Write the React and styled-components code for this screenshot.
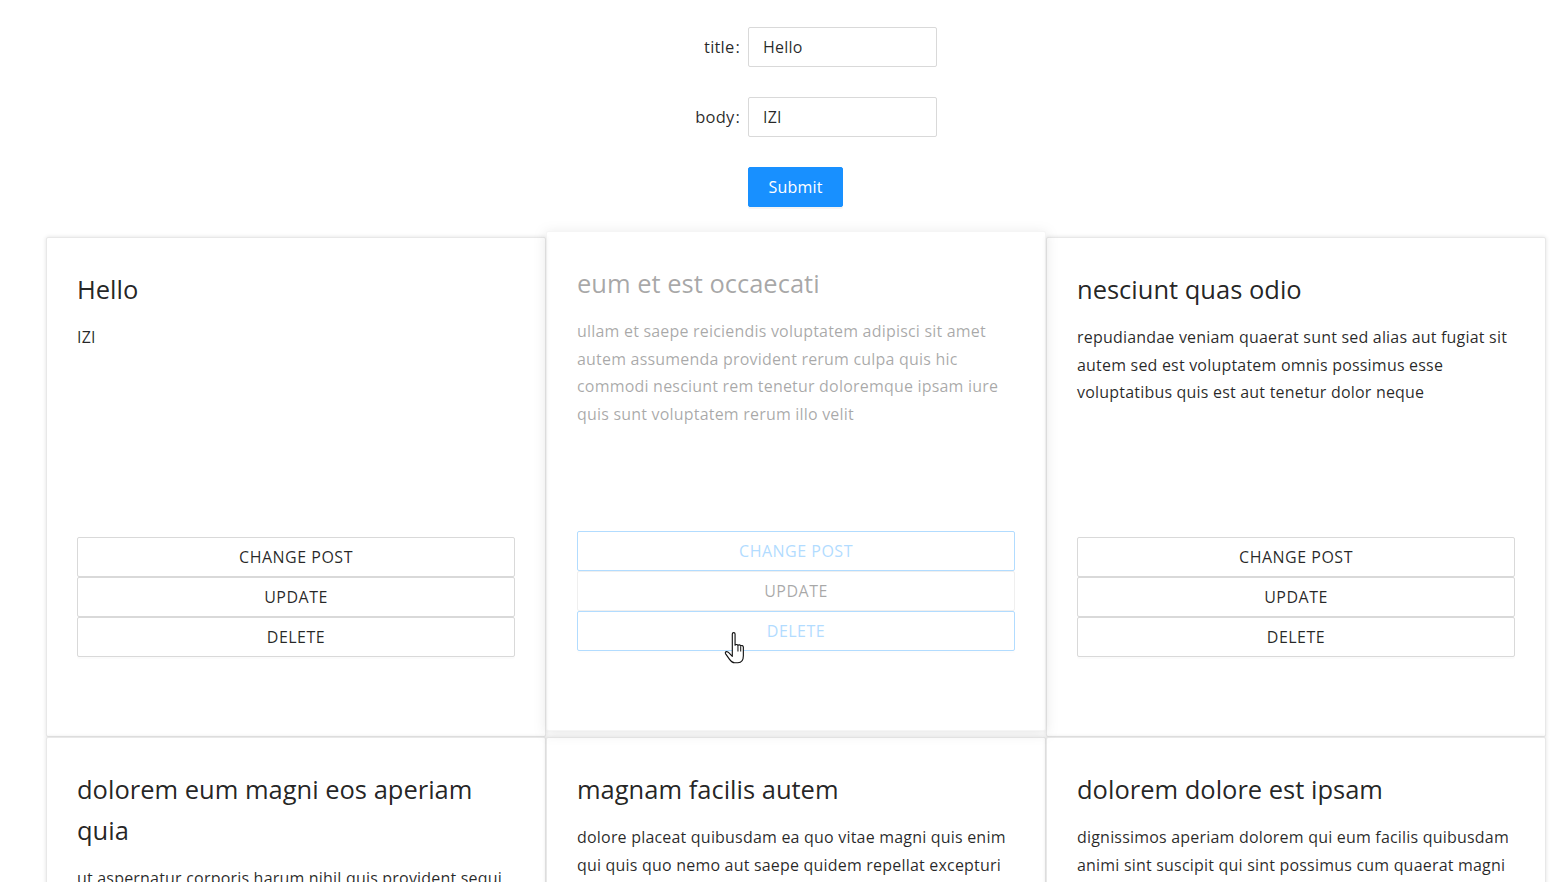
import React from "react";
import styled, { createGlobalStyle } from "styled-components";

const GlobalStyle = createGlobalStyle`
  html, body {
    margin: 0;
    padding: 0;
    background: #fff;
  }
  body {
    font-family: "Open Sans", "Noto Sans", "Liberation Sans", Arial, sans-serif;
    font-size: 16px;
    line-height: 1.7;
    letter-spacing: 0.2px;
    color: rgba(0, 0, 0, 0.85);
    overflow: hidden;
  }
  * { box-sizing: border-box; }
`;

const Page = styled.div`
  position: relative;
  padding-top: 27px;
`;

const Form = styled.form`
  display: flex;
  flex-direction: column;
  gap: 30px;
`;

const FormItem = styled.div`
  display: grid;
  grid-template-columns: 748px 189px;
  align-items: center;
  height: 40px;
`;

const Label = styled.label`
  justify-self: end;
  font-size: 16.5px;
  color: rgba(0, 0, 0, 0.85);
  &::after {
    content: ":";
    margin: 0 8px 0 1px;
  }
`;

const Input = styled.input`
  width: 189px;
  height: 40px;
  padding: 0 14px;
  border: 1px solid #d9d9d9;
  border-radius: 2px;
  font-family: inherit;
  font-size: 16px;
  letter-spacing: 0.2px;
  color: rgba(0, 0, 0, 0.85);
  outline: none;
`;

const SubmitButton = styled.button`
  grid-column: 2;
  justify-self: start;
  width: 95px;
  height: 40px;
  border: 1px solid #1890ff;
  border-radius: 2px;
  background: #1890ff;
  color: #fff;
  font-family: inherit;
  font-size: 16px;
  letter-spacing: 0.2px;
  box-shadow: 0 2px 0 rgba(0, 0, 0, 0.045);
`;

const Grid = styled.div`
  margin: 30px 0 0 46px;
  display: grid;
  grid-template-columns: repeat(3, 500px);
`;

const Card = styled.div`
  position: relative;
  height: 500px;
  padding: 31px 30px 30px;
  display: flex;
  flex-direction: column;
  background: #fff;
  border: 1px solid #e8e8e8;
  border-radius: 2px;
  box-shadow: 0 0 4px rgba(0, 0, 0, 0.12);
  ${(p) =>
    p.$hovered &&
    `
    z-index: 2;
    opacity: 0.4;
    transform: translateY(-6px);
    box-shadow: 0 2px 12px rgba(0, 0, 0, 0.25);
  `}
`;

const Title = styled.h3`
  margin: 0 0 14px;
  font-size: 25.5px;
  font-weight: 500;
  line-height: 41px;
  letter-spacing: 0;
  color: rgba(0, 0, 0, 0.87);
`;

const Body = styled.p`
  margin: 0;
  font-size: 16px;
  line-height: 27.5px;
  color: rgba(0, 0, 0, 0.85);
`;

const Actions = styled.div`
  margin-top: auto;
  margin-bottom: 49px;
  display: flex;
  flex-direction: column;
`;

const ActionButton = styled.button`
  height: 40px;
  width: 100%;
  border: 1px solid ${(p) => (p.$active ? "#40a9ff" : "#d9d9d9")};
  border-radius: 2px;
  background: #fff;
  color: ${(p) => (p.$active ? "#40a9ff" : "rgba(0, 0, 0, 0.85)")};
  font-family: inherit;
  font-size: 16px;
  letter-spacing: 0.5px;
  text-transform: uppercase;
  box-shadow: 0 2px 0 rgba(0, 0, 0, 0.015);
`;

const Cursor = styled.svg`
  position: absolute;
  left: 724px;
  top: 632px;
  width: 21px;
  height: 32px;
  pointer-events: none;
  z-index: 10;
`;

const posts = [
  { title: "Hello", body: "IZI" },
  {
    title: "eum et est occaecati",
    body:
      "ullam et saepe reiciendis voluptatem adipisci sit amet autem assumenda provident rerum culpa quis hic commodi nesciunt rem tenetur doloremque ipsam iure quis sunt voluptatem rerum illo velit",
    hovered: true,
  },
  {
    title: "nesciunt quas odio",
    body:
      "repudiandae veniam quaerat sunt sed alias aut fugiat sit autem sed est voluptatem omnis possimus esse voluptatibus quis est aut tenetur dolor neque",
  },
  {
    title: "dolorem eum magni eos aperiam quia",
    body:
      "ut aspernatur corporis harum nihil quis provident sequi mollitia nobis aliquid molestiae perspiciatis et ea nemo ab reprehenderit accusantium quas voluptate dolores velit et doloremque molestiae",
  },
  {
    title: "magnam facilis autem",
    body:
      "dolore placeat quibusdam ea quo vitae magni quis enim qui quis quo nemo aut saepe quidem repellat excepturi ut quia sunt ut sequi eos ea sed quas",
  },
  {
    title: "dolorem dolore est ipsam",
    body:
      "dignissimos aperiam dolorem qui eum facilis quibusdam animi sint suscipit qui sint possimus cum quaerat magni maiores excepturi ipsam ut commodi dolor voluptatum modi aut vitae",
  },
];

function HandCursor() {
  return (
    <Cursor viewBox="0 0 16.5 25.5">
      <path
        d="M6.5 1.5 C6.5 0.7 7.1 0.5 7.6 0.5 C8.2 0.5 8.7 0.9 8.7 1.6 L8.7 10.5 C9.2 9.8 10.6 9.8 11 10.7 C11.5 10 12.9 10.1 13.2 11.1 C13.8 10.5 15.2 10.8 15.3 11.9 L15.3 19 C15.3 22.5 13.6 24.5 11 24.5 L8.3 24.5 C6.6 24.5 5.4 23.4 4.3 21.8 L1.2 17.4 C0.6 16.5 1.1 15.6 2 15.6 C2.7 15.6 3.3 16 3.9 16.7 L6.5 19.4 Z"
        fill="#fff"
        stroke="#111"
        strokeWidth="0.9"
        strokeLinejoin="round"
      />
      <path d="M11 11 L11 15.5 M13.2 11.4 L13.2 15.5" stroke="#111" strokeWidth="0.8" />
    </Cursor>
  );
}

export default function App() {
  return (
    <>
      <GlobalStyle />
      <Page>
        <Form onSubmit={(e) => e.preventDefault()}>
          <FormItem>
            <Label>title</Label>
            <Input defaultValue="Hello" />
          </FormItem>
          <FormItem>
            <Label>body</Label>
            <Input defaultValue="IZI" />
          </FormItem>
          <FormItem>
            <SubmitButton type="submit">Submit</SubmitButton>
          </FormItem>
        </Form>
        <Grid>
          {posts.map((post, i) => (
            <Card key={i} $hovered={post.hovered}>
              <Title>{post.title}</Title>
              <Body>{post.body}</Body>
              <Actions>
                <ActionButton $active={post.hovered}>Change post</ActionButton>
                <ActionButton>Update</ActionButton>
                <ActionButton $active={post.hovered}>Delete</ActionButton>
              </Actions>
            </Card>
          ))}
        </Grid>
        <HandCursor />
      </Page>
    </>
  );
}
